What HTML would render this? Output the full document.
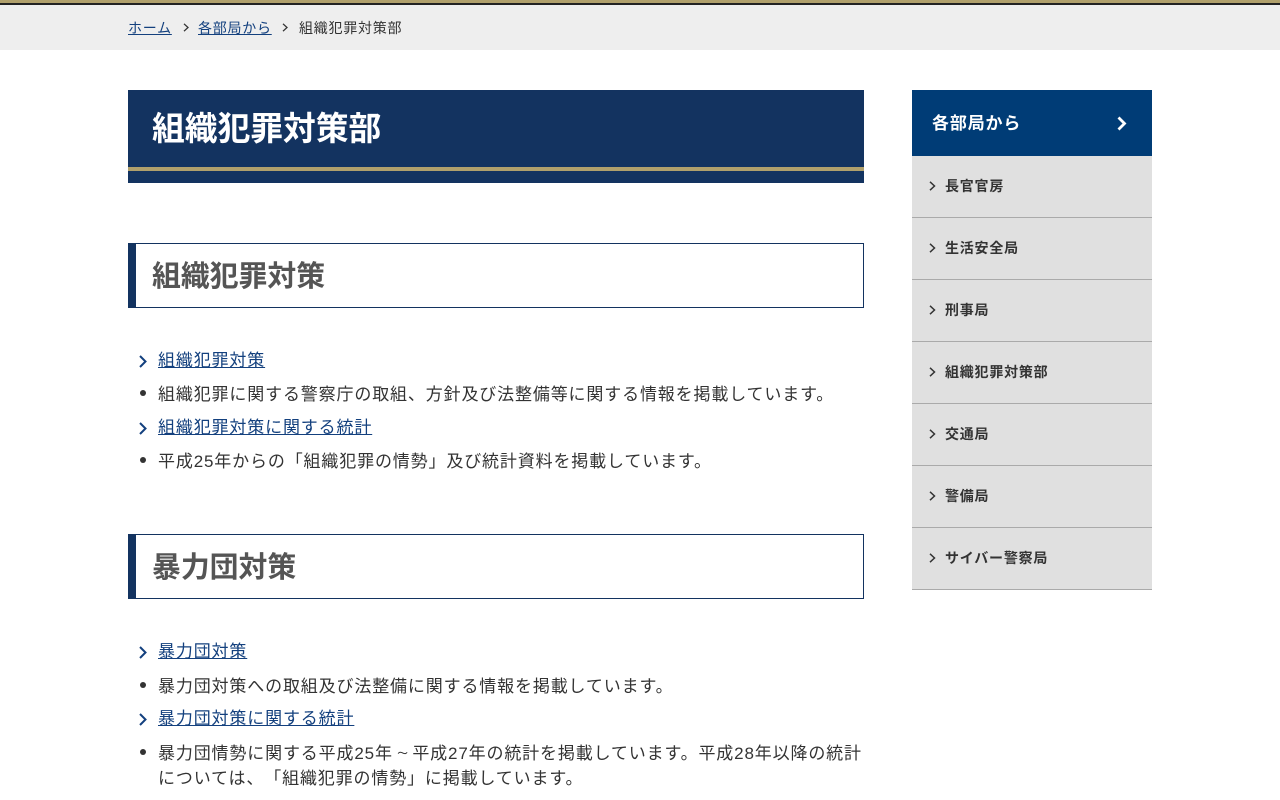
<!DOCTYPE html>
<html lang="ja"><head><meta charset="utf-8"><title>組織犯罪対策部</title>
<style>
*{box-sizing:border-box}
html,body{margin:0;padding:0;background:#fff;width:1280px;height:800px;overflow:hidden}
body{position:relative;font-family:"Liberation Sans","Noto Sans CJK JP",sans-serif;color:#333;text-spacing-trim:space-all}
.a{position:absolute;white-space:nowrap}
a{color:#13407e;text-decoration:underline}
.t{font-size:17px;letter-spacing:.85px;line-height:24px;left:158px}
.tl{font-family:"NanumGothic",sans-serif;display:inline-block;width:19.5px;text-align:center;letter-spacing:0}
.b{position:absolute;left:140px;width:6px;height:6px;border-radius:50%;background:#333}
svg{position:absolute;overflow:visible}
.h2{position:absolute;left:128px;width:736px;height:65px;border:1px solid #133360;border-left:8px solid #133360}
.h2t{font-size:28.85px;font-weight:bold;color:#555;left:152px;line-height:40px}
.s{position:absolute;left:912px;width:240px;height:62px;background:#e0e0e0;border-bottom:1px solid #aaa}
.st{position:absolute;left:33px;top:19px;font-size:14px;letter-spacing:.78px;font-weight:bold;line-height:22px;color:#333;white-space:nowrap}
.bc{font-size:14px;letter-spacing:.75px;line-height:21px;top:18px}
</style></head><body>
<div class="a" style="left:0;top:0;width:1280px;height:5px;background:#b0a06c;border-bottom:2px solid #222"></div>
<div class="a" style="left:0;top:5px;width:1280px;height:45px;background:#eee"></div>
<div class="a bc" style="left:128px"><a href="#">ホーム</a></div>
<svg style="left:183px;top:23px" width="6" height="9"><path d="M1 .8 5 4.5 1 8.2" fill="none" stroke="#333" stroke-width="1.3"/></svg>
<div class="a bc" style="left:198px"><a href="#">各部局から</a></div>
<svg style="left:282px;top:23px" width="6" height="9"><path d="M1 .8 5 4.5 1 8.2" fill="none" stroke="#333" stroke-width="1.3"/></svg>
<div class="a bc" style="left:299px">組織犯罪対策部</div>

<div class="a" style="left:128px;top:90px;width:736px;height:93px;background:#133360"></div>
<div class="a" style="left:128px;top:167px;width:736px;height:4px;background:#b0a06c"></div>
<div class="a" style="left:152px;top:107px;font-size:32.75px;font-weight:bold;color:#fff;line-height:44px">組織犯罪対策部</div>

<div class="h2" style="top:243px"></div>
<div class="a h2t" style="top:257px">組織犯罪対策</div>
<svg style="left:139px;top:355px" width="8" height="13"><path d="M1 1 6.5 6.5 1 12" fill="none" stroke="#13407e" stroke-width="2"/></svg>
<div class="a t" style="top:349px"><a href="#">組織犯罪対策</a></div>
<div class="b" style="top:390px"></div>
<div class="a t" style="top:383px">組織犯罪に関する警察庁の取組、方針及び法整備等に関する情報を掲載しています。</div>
<svg style="left:139px;top:422px" width="8" height="13"><path d="M1 1 6.5 6.5 1 12" fill="none" stroke="#13407e" stroke-width="2"/></svg>
<div class="a t" style="top:416px"><a href="#">組織犯罪対策に関する統計</a></div>
<div class="b" style="top:457px"></div>
<div class="a t" style="top:450px">平成25年からの「組織犯罪の情勢」及び統計資料を掲載しています。</div>

<div class="h2" style="top:534px"></div>
<div class="a h2t" style="top:548px">暴力団対策</div>
<svg style="left:139px;top:646px" width="8" height="13"><path d="M1 1 6.5 6.5 1 12" fill="none" stroke="#13407e" stroke-width="2"/></svg>
<div class="a t" style="top:640px"><a href="#">暴力団対策</a></div>
<div class="b" style="top:682px"></div>
<div class="a t" style="top:675px">暴力団対策への取組及び法整備に関する情報を掲載しています。</div>
<svg style="left:139px;top:713px" width="8" height="13"><path d="M1 1 6.5 6.5 1 12" fill="none" stroke="#13407e" stroke-width="2"/></svg>
<div class="a t" style="top:707px"><a href="#">暴力団対策に関する統計</a></div>
<div class="b" style="top:749px"></div>
<div class="a t" style="top:742px">暴力団情勢に関する平成25年<span class="tl">～</span>平成27年の統計を掲載しています。平成28年以降の統計</div>
<div class="a t" style="top:767px">については、「組織犯罪の情勢」に掲載しています。</div>

<div class="a" style="left:912px;top:90px;width:240px;height:66px;background:#003c76"></div>
<div class="a" style="left:932px;top:112px;font-size:17px;letter-spacing:.85px;font-weight:bold;color:#fff;line-height:24px">各部局から</div>
<svg style="left:1117px;top:116px" width="12" height="15"><path d="M1.5 1.5 7.5 7.5 1.5 13.5" fill="none" stroke="#fff" stroke-width="2.8"/></svg>

<div class="s" style="top:156px"><svg style="left:17px;top:25px" width="7" height="10"><path d="M1 .8 5.5 5 1 9.2" fill="none" stroke="#333" stroke-width="1.5"/></svg><span class="st">長官官房</span></div>
<div class="s" style="top:218px"><svg style="left:17px;top:25px" width="7" height="10"><path d="M1 .8 5.5 5 1 9.2" fill="none" stroke="#333" stroke-width="1.5"/></svg><span class="st">生活安全局</span></div>
<div class="s" style="top:280px"><svg style="left:17px;top:25px" width="7" height="10"><path d="M1 .8 5.5 5 1 9.2" fill="none" stroke="#333" stroke-width="1.5"/></svg><span class="st">刑事局</span></div>
<div class="s" style="top:342px"><svg style="left:17px;top:25px" width="7" height="10"><path d="M1 .8 5.5 5 1 9.2" fill="none" stroke="#333" stroke-width="1.5"/></svg><span class="st">組織犯罪対策部</span></div>
<div class="s" style="top:404px"><svg style="left:17px;top:25px" width="7" height="10"><path d="M1 .8 5.5 5 1 9.2" fill="none" stroke="#333" stroke-width="1.5"/></svg><span class="st">交通局</span></div>
<div class="s" style="top:466px"><svg style="left:17px;top:25px" width="7" height="10"><path d="M1 .8 5.5 5 1 9.2" fill="none" stroke="#333" stroke-width="1.5"/></svg><span class="st">警備局</span></div>
<div class="s" style="top:528px"><svg style="left:17px;top:25px" width="7" height="10"><path d="M1 .8 5.5 5 1 9.2" fill="none" stroke="#333" stroke-width="1.5"/></svg><span class="st">サイバー警察局</span></div>
</body></html>
